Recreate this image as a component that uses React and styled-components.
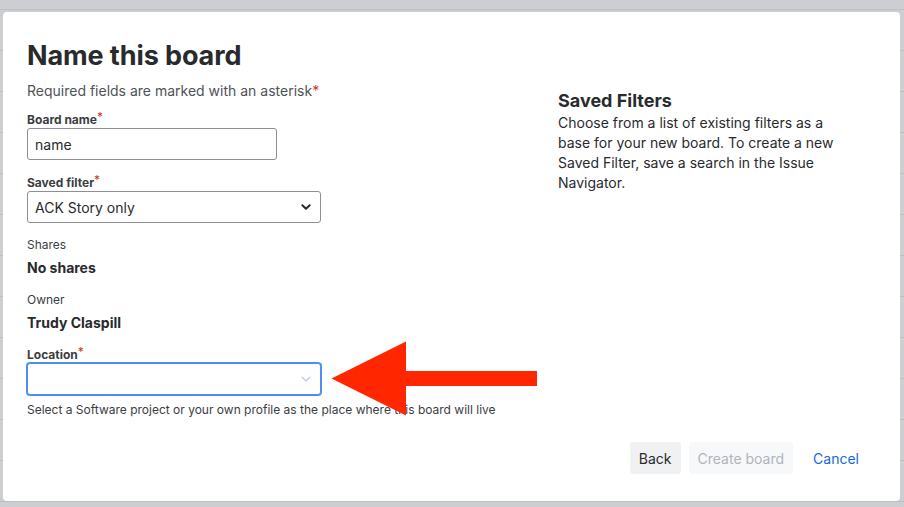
import styled, { createGlobalStyle } from 'styled-components';

const GlobalStyle = createGlobalStyle`
  html, body {
    margin: 0;
    padding: 0;
  }
  body {
    font-family: Inter, "Noto Sans", "Liberation Sans", sans-serif;
    color: #292a2e;
    -webkit-font-smoothing: antialiased;
  }
`;

const Backdrop = styled.div`
  position: relative;
  width: 904px;
  height: 507px;
  box-sizing: border-box;
  padding: 12px 4px 6px 3px;
  overflow: hidden;
  background-color: #cdced2;
  background-image: repeating-linear-gradient(
    to bottom,
    transparent 0,
    transparent 9px,
    #bdbec2 9px,
    #bdbec2 10px,
    transparent 10px,
    transparent 41px
  );
`;

const Modal = styled.section`
  height: 100%;
  box-sizing: border-box;
  background: #fff;
  border-radius: 4px;
  padding: 28px 29px 27px 24px;
  display: flex;
  flex-direction: column;
`;

const Body = styled.div`
  display: grid;
  grid-template-columns: 531px 290px;
  align-items: start;
`;

const FormColumn = styled.div`
  display: flex;
  flex-direction: column;
`;

const Title = styled.h1`
  margin: 0;
  font-size: 27px;
  line-height: 32px;
  font-weight: 700;
  color: #292a2e;
  letter-spacing: -0.1px;
`;

const Subtitle = styled.p`
  margin: 9px 0 0;
  font-size: 14px;
  line-height: 20px;
  color: #505258;
`;

const Asterisk = styled.span`
  color: #c9372c;
  font-weight: 400;
  font-size: ${(p) => (p.$small ? '12px' : '14px')};
  line-height: 0;
  vertical-align: ${(p) => (p.$small ? '3px' : '0')};
`;

const Label = styled.div`
  margin-top: ${(p) => p.$top}px;
  font-size: 12px;
  line-height: 16px;
  font-weight: ${(p) => (p.$plain ? 400 : 700)};
  color: #3b3d42;
`;

const Value = styled.div`
  margin-top: 5px;
  font-size: 14px;
  line-height: 20px;
  font-weight: 700;
  color: #292a2e;
`;

const TextInput = styled.input`
  display: block;
  width: ${(p) => p.$width}px;
  height: 32px;
  box-sizing: border-box;
  margin: 0;
  padding: 0 7px;
  border: 1px solid #8c8f97;
  border-radius: 3px;
  background: #fff;
  font-family: inherit;
  font-size: 14px;
  color: #292a2e;
  outline: none;
`;

const SelectBox = styled.div`
  width: ${(p) => p.$width}px;
  height: 32px;
  box-sizing: border-box;
  padding: 0 8px 0 7px;
  border: 1px solid ${(p) => (p.$focused ? '#4c8ff0' : '#8c8f97')};
  box-shadow: ${(p) => (p.$focused ? '0 0 0 1px #4c8ff0' : 'none')};
  border-radius: 3px;
  background: #fff;
  display: flex;
  align-items: center;
  justify-content: space-between;
  font-size: 14px;
  color: #292a2e;
`;

const Helper = styled.div`
  margin-top: 7px;
  font-size: 12px;
  line-height: 16px;
  color: #3b3d42;
`;

const Aside = styled.aside`
  margin-top: 49px;
`;

const AsideTitle = styled.h2`
  margin: 0;
  font-size: 18px;
  line-height: 24px;
  font-weight: 700;
  color: #292a2e;
`;

const AsideText = styled.p`
  margin: 0;
  font-size: 14px;
  line-height: 20px;
  color: #292a2e;
`;

const Footer = styled.div`
  margin-top: auto;
  display: flex;
  justify-content: flex-end;
  gap: 8px;
`;

const Button = styled.button`
  height: 32px;
  padding: 0 ${(p) => (p.$link ? 12 : 9)}px;
  border: none;
  border-radius: 3px;
  font-family: inherit;
  font-size: 14px;
  background: ${(p) =>
    p.$link ? 'transparent' : p.disabled ? '#f7f8f9' : '#f0f1f2'};
  color: ${(p) =>
    p.$link ? '#1868db' : p.disabled ? '#b0b4bb' : '#292a2e'};
`;

const Annotation = styled.svg`
  position: absolute;
  left: 0;
  top: 0;
  pointer-events: none;
`;

function Chevron({ color, weight }) {
  return (
    <svg width="12" height="12" viewBox="0 0 12 12" fill="none">
      <path
        d="M2.3 4.3 L6 7.8 L9.7 4.3"
        stroke={color}
        strokeWidth={weight}
        strokeLinecap="round"
        strokeLinejoin="round"
      />
    </svg>
  );
}

export default function App() {
  return (
    <Backdrop>
      <GlobalStyle />
      <Modal>
        <Body>
          <FormColumn>
            <Title>Name this board</Title>
            <Subtitle>
              Required fields are marked with an asterisk<Asterisk>*</Asterisk>
            </Subtitle>

            <Label $top={11}>
              Board name<Asterisk $small>*</Asterisk>
            </Label>
            <TextInput $width={250} value="name" readOnly />

            <Label $top={15}>
              Saved filter<Asterisk $small>*</Asterisk>
            </Label>
            <SelectBox $width={294}>
              <span>ACK Story only</span>
              <Chevron color="#292a2e" weight={2} />
            </SelectBox>

            <Label $top={14} $plain>Shares</Label>
            <Value>No shares</Value>

            <Label $top={14} $plain>Owner</Label>
            <Value>Trudy Claspill</Value>

            <Label $top={14}>
              Location<Asterisk $small>*</Asterisk>
            </Label>
            <SelectBox $width={294} $focused>
              <span />
              <Chevron color="#c5d3ec" weight={1.6} />
            </SelectBox>
            <Helper>
              Select a Software project or your own profile as the place where this board will live
            </Helper>
          </FormColumn>

          <Aside>
            <AsideTitle>Saved Filters</AsideTitle>
            <AsideText>
              Choose from a list of existing filters as a base for your new board. To create a new
              Saved Filter, save a search in the Issue Navigator.
            </AsideText>
          </Aside>
        </Body>

        <Footer>
          <Button>Back</Button>
          <Button disabled>Create board</Button>
          <Button $link>Cancel</Button>
        </Footer>
      </Modal>

      <Annotation width="904" height="507" viewBox="0 0 904 507">
        <polygon
          points="331.5,378.5 406,341.5 406,371 537,371 537,386 406,386 406,415.5"
          fill="#ff2600"
        />
      </Annotation>
    </Backdrop>
  );
}
